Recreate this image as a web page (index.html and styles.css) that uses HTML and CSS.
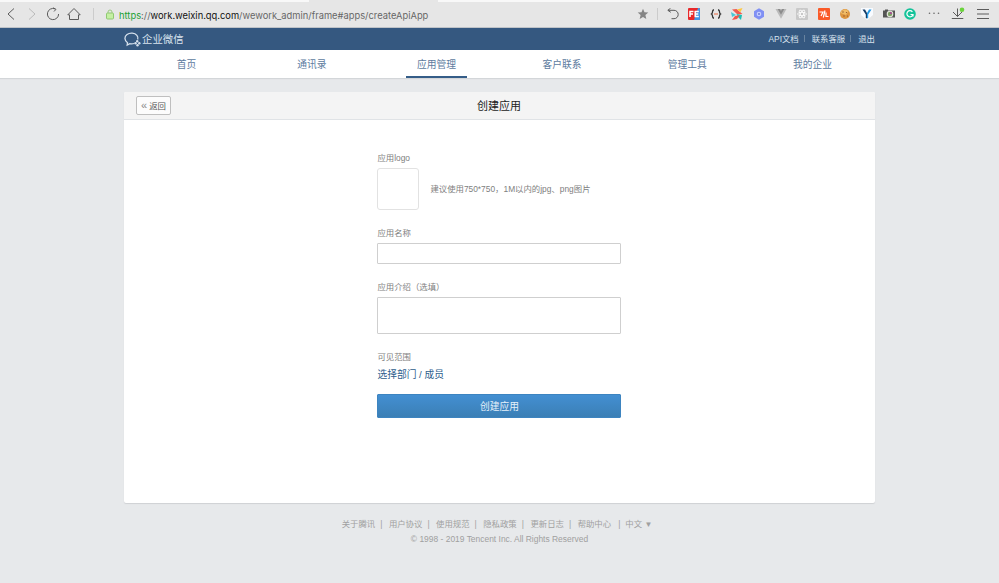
FILE: index.html
```html
<!DOCTYPE html>
<html lang="zh-CN">
<head>
<meta charset="UTF-8" />
<meta name="viewport" content="width=device-width, initial-scale=1" />
<title>创建应用 - 企业微信</title>
<link rel="stylesheet" href="styles.css">
</head>
<body>

<div class="tabs"><div class="tab"></div></div>
<div class="browser">
  <svg class="icon back" width="10" height="14" viewBox="0 0 10 14"><path d="M8 1.500 2 7l6 5.500"/></svg>
  <svg class="icon forward" width="10" height="14" viewBox="0 0 10 14"><path d="M2 1.500 8 7l-6 5.500"/></svg>
  <svg class="icon reload" width="14" height="14" viewBox="0 0 14 14"><path d="M9 1.800A5.600 5.600 0 1 0 12.600 7M7 .8l3 1.500-2 2.200"/></svg>
  <svg class="icon home" width="14" height="14" viewBox="0 0 14 14"><path d="M.8 7.800 7 1.500l6.200 6.300H11.500V12.500h-9V7.800Z"/></svg>
  <span class="divider"></span>
  <svg class="lock" width="8" height="11" viewBox="0 0 8 11"><path d="M2 5V3a2 2 0 0 1 4 0v2" fill="none" stroke="#9ccb83"/><rect x=".5" y="4" width="7" height="6" rx="1" fill="#c4f0a3" stroke="#8fc873"/></svg>
  <span class="url"><span class="scheme">https</span>://<span class="host">work.weixin.qq.com</span>/wework_admin/frame#apps/createApiApp</span>
  <div class="extensions">
    <svg width="12" height="12" viewBox="0 0 12 12"><path fill="#858585" d="m6 .8 1.500 3.500 3.800.3-2.900 2.500.9 3.800L6 8.900l-3.300 2 .9-3.800L.7 4.600l3.800-.3Z"/></svg>
    <span class="divider"></span>
    <svg class="icon" width="12" height="12" viewBox="0 0 12 12"><path d="M3.500.3.8 2.300l3 2M1 2.300h6a4.200 4.200 0 0 1 0 8.400H4.500"/></svg>
    <svg width="12" height="12" viewBox="0 0 12 12"><rect width="12" height="12" rx="1" fill="#e8282a"/><path fill="#4595e4" d="M10 0h1a1 1 0 0 1 1 1v10a1 1 0 0 1-1 1H6Z"/><path fill="none" stroke="#fff" stroke-width="1.500" d="M5.500 3.500H2V9M2 6h3M10.800 3.500H7.200v5h3.600M7 6h3.300"/></svg>
    <svg width="12" height="12" viewBox="0 0 12 12"><path fill="none" stroke="#333" stroke-width="1.300" d="M4 2H3.300C2 2.300 3.200 5 1.500 6c1.700 1 .5 3.700 1.800 4H4M8 2h.7c1.300.3.100 3 1.800 4-1.700 1-.5 3.700-1.800 4H8"/><path stroke="#e8663d" d="M4 6h4"/></svg>
    <svg class="bird" width="14" height="14" viewBox="0 0 14 14"><path fill="#f05b4f" d="M2 2.500 6.500 2l6 5-5 .5Z"/><path fill="#ffc83d" d="m12.500 1-2 4L7 2.500Z"/><path fill="#1bc0b6" d="m6.500 7 5.500 1-1 5-3-3Z"/><path fill="#f0584c" d="m5 9 5-1-3 4-5 1Z"/><path fill="#48c8d4" d="m1 5 5 3-4 2Z"/></svg>
    <svg width="12" height="12" viewBox="0 0 12 12"><path fill="#8090f4" d="m6 .3 5 2.900v5.600l-5 2.900-5-2.900V3.200Z"/><circle cx="6" cy="6" r="2.300" fill="#c6ceff"/><circle cx="6" cy="6" r=".9" fill="#6272d8"/></svg>
    <svg width="12" height="12" viewBox="0 0 12 12"><path fill="#bbb" d="M.5 1h11L6 10.800Z"/><path fill="#8c8c8c" d="M2.700 1h2.100L6 3l1.200-2h2.100L6 6.800Z"/></svg>
    <svg width="12" height="12" viewBox="0 0 12 12"><rect width="12" height="12" rx="1" fill="#c9c9c9"/><g fill="none" stroke="#fff" stroke-width=".8"><ellipse cx="6" cy="6" rx="4.500" ry="1.700"/><ellipse cx="6" cy="6" rx="4.500" ry="1.700" transform="rotate(60 6 6)"/><ellipse cx="6" cy="6" rx="4.500" ry="1.700" transform="rotate(120 6 6)"/></g></svg>
    <svg width="12" height="12" viewBox="0 0 12 12"><rect width="12" height="12" rx="1" fill="#fa5a28"/><path fill="none" stroke="#fff" stroke-width="1.200" d="M1.500 4H5L3 8M7 2.500 5.300 9.500M8 4.500 8 8.500h2.500"/></svg>
    <svg width="12" height="12" viewBox="0 0 12 12"><circle cx="6" cy="6" r="5" fill="#dd963f"/><path fill="#f0bc67" d="M1.500 5a4.700 4.700 0 0 1 8-2L7 7Z"/><g fill="#8a512a"><circle cx="4" cy="4" r=".7"/><circle cx="7.500" cy="4.500" r=".6"/><circle cx="5" cy="8" r=".7"/><circle cx="8.500" cy="8" r=".6"/></g></svg>
    <svg width="12" height="12" viewBox="0 0 12 12"><path fill="#f8fbff" d="M0 0h12v7l-6 5-6-5Z"/><path fill="#173f69" d="M1.500 1.500H4L6 5v5.500L4.800 10V6.500Z"/><path fill="#279ae4" d="M10.500 1.500H8L6 5v5.500l1.200-.5V6.500Z"/></svg>
    <svg width="12" height="12" viewBox="0 0 12 12"><path fill="#555" d="M0 2.500h2v-1h3v1h7v7H0Z"/><circle cx="7" cy="6" r="3.300" fill="#e5e8dc"/><circle cx="7" cy="6" r="2.200" fill="#7c9d63"/><path fill="#a54f91" d="M7 6V3.800A2.200 2.200 0 0 1 9.200 6Z"/></svg>
    <svg width="12" height="12" viewBox="0 0 12 12"><circle cx="6" cy="6" r="5.800" fill="#15c39a"/><path fill="none" stroke="#fff" stroke-width="1.200" d="M8.400 3.800A3.100 3.100 0 1 0 9 6.500H6.500M9 6.500v2"/></svg>
    <svg class="more" width="12" height="12" viewBox="0 0 12 12"><g fill="#666"><circle cx="1.500" cy="5.200" r=".8"/><circle cx="6" cy="5.200" r=".8"/><circle cx="10.500" cy="5.200" r=".8"/></g></svg>
    <svg class="icon download" width="14" height="14" viewBox="0 0 14 14"><path d="M6.500 1.500v8M2 5l4.500 4.500L11 5M.8 11.500h11.500"/><circle cx="11" cy="2.800" r="2.300" fill="#6ad33b" stroke="none"/></svg>
    <svg class="icon menu" width="12" height="12" viewBox="0 0 12 12"><path d="M0 1.500h12M0 6h12M0 10.500h12"/></svg>
  </div>
</div>

<header>
  <div class="wrap">
    <a class="brand" href="#">
      <svg width="17" height="15" viewBox="0 0 17 15"><path fill="none" stroke="#d5e0ec" stroke-width="1.300" d="M10 11.500c-1.400.5-2.800.5-4.200.2L3.200 13l.3-2.300C.2 8.400.1 4.700 3 2.500c3-2.200 7.700-1.800 9.900.8 1.100 1.400 1.400 2.800.8 4.200"/><g fill="#d5e0ec"><circle cx="13.200" cy="9.300" r="1.200"/><circle cx="11.500" cy="11.300" r="1.200"/><circle cx="15.300" cy="11.200" r="1.200"/><circle cx="13.500" cy="13.200" r="1.200"/></g></svg>
      <span>企业微信</span>
    </a>
    <div class="links"><a href="#">API文档</a><i></i><a href="#">联系客服</a><i></i><a href="#">退出</a></div>
  </div>
</header>

<nav>
  <a href="#">首页</a>
  <a href="#">通讯录</a>
  <a href="#" class="active">应用管理</a>
  <a href="#">客户联系</a>
  <a href="#">管理工具</a>
  <a href="#">我的企业</a>
</nav>

<main class="card">
  <div class="card-head">
    <a class="return" href="#"><span>«</span> 返回</a>
    <h1>创建应用</h1>
  </div>
  <form>
    <label>应用logo</label>
    <div class="logo-row">
      <div class="logo-box"></div>
      <span>建议使用750*750，1M以内的jpg、png图片</span>
    </div>
    <label for="name">应用名称</label>
    <input id="name" type="text">
    <label for="intro">应用介绍（选填）</label>
    <textarea id="intro"></textarea>
    <label>可见范围</label>
    <a class="choose" href="#">选择部门 / 成员</a>
    <button type="button">创建应用</button>
  </form>
</main>

<footer>
  <div class="footer-links">
    <a href="#">关于腾讯</a><i>|</i><a href="#">用户协议</a><i>|</i><a href="#">使用规范</a><i>|</i><a href="#">隐私政策</a><i>|</i><a href="#">更新日志</a><i>|</i><a href="#">帮助中心</a><i class="last">|</i><a class="lang" href="#">中文 <span>▼</span></a>
  </div>
  <p>© 1998 - 2019 Tencent Inc. All Rights Reserved</p>
</footer>

</body>
</html>
```
FILE: styles.css
```css
* { box-sizing: border-box; }
body {
  margin: 0; height: 583px; overflow: hidden; background: #e7e9eb;
  font-family: "Liberation Sans", "Noto Sans CJK SC", sans-serif; font-size: 8.4px; color: #808080;
}
a { color: inherit; text-decoration: none; }
i { font-style: normal; }
svg { display: block; flex: none; }

.tabs { height: 2px; padding-left: 309px; background: #f8f8f8; }
.tab { width: 129px; height: 2px; background: #e6e6e6; }
.browser {
  height: 26px; padding: 0 10px 1px 6px; display: flex; align-items: center;
  background: #e6e6e6; border-bottom: 1px solid #bfc3c8;
}
.icon { fill: none; stroke: #5c5c5c; stroke-width: 1; }
.forward { stroke: #bbb; margin-left: 11px; }
.reload { margin-left: 9px; }
.home { margin-left: 7px; }
.divider { width: 1px; height: 12px; background: #ccc; }
.home + .divider { margin-left: 12px; }
.lock { margin-left: 12px; }
.url { margin: 2px 0 0 5px; font-family: Inter, sans-serif; font-size: 9.35px; color: #666; white-space: nowrap; }
.scheme { color: #16a132; }
.host { color: #111; }
.extensions { margin-left: auto; display: flex; align-items: center; gap: 9.6px; }
.extensions .divider { margin: 0 -1px; }
.extensions .bird { margin: 0 -1px; }
.extensions .more { margin-left: 2px; }
.extensions .download { margin-left: 2px; }
.extensions .menu { margin-left: 2px; }

header { height: 22px; background: #355880; color: #d9e3ee; }
.wrap { width: 751px; height: 100%; margin: 0 auto; display: flex; align-items: center; justify-content: space-between; }
.brand { display: flex; align-items: center; gap: 1px; font-size: 10.4px; }
.brand span { padding-bottom: 2px; }
.links { display: flex; align-items: center; padding-bottom: 2px; }
.links i { width: 1px; height: 7px; margin: 0 7px 0 5px; background: #68839f; }

nav {
  height: 28px; padding: 0 124px; display: flex;
  background: #fff; box-shadow: 0 1px 1px #d3d6d9; color: #5d7b9e; font-size: 9.75px;
}
nav a { flex: 1; display: flex; justify-content: center; align-items: center; }
nav .active { flex: none; width: 61px; margin: 0 32px; border-bottom: 2px solid #355d88; padding: 2px 1px 0 0; }

.card {
  width: 751px; height: 411px; margin: 14px auto 0; background: #fff;
  border-radius: 2px; box-shadow: 0 1px 1px #cfd1d4;
}
.card-head {
  height: 28px; padding-left: 12px; display: grid; grid-template-columns: 1fr auto 1fr; align-items: center;
  background: #f4f4f4; border-bottom: 1px solid #e0e3e6; border-radius: 2px 2px 0 0;
}
.return {
  width: 35px; height: 19px; padding-bottom: 2px; display: flex; align-items: center; justify-content: center; gap: 2px;
  background: #fcfcfc; border: 1px solid #bfbfbf; border-radius: 2px; color: #555;
}
.return span { font-size: 11px; line-height: 10px; color: #888; }
h1 { margin: 0; font-size: 11px; font-weight: normal; color: #222; }
.card-head h1 { margin-left: -13px; padding-bottom: 2px; }

form { width: 244px; margin: 0 0 0 253.4px; padding-top: 32px; display: flex; flex-direction: column; }
label { height: 12px; margin-bottom: 4px; line-height: 12px; }
.logo-row { height: 42px; margin-bottom: 17px; display: flex; align-items: center; gap: 11px; }
.logo-row span { padding-bottom: 2px; }
.logo-box { width: 42px; height: 42px; border: 1px solid #e2e2e2; border-radius: 3px; }
input, textarea { width: 100%; margin: 0; border: 1px solid #cfcfcf; border-radius: 1px; background: #fff; resize: none; outline: none; }
input { height: 21px; margin-bottom: 17px; }
textarea { height: 37px; margin-bottom: 17px; }
.choose { height: 16px; line-height: 16px; font-size: 9.75px; color: #2d5e8c; }
button {
  height: 24px; margin-top: 11px; padding: 0 0 1px; border: 1px solid #3d84c0; border-radius: 1px;
  background: linear-gradient(#438fd2, #3b7fb5); color: #e6f1fa; font-family: inherit; font-size: 9.75px;
}

footer { margin-top: 15px; text-align: center; color: #a0a0a0; }
.footer-links { padding-right: 5px; display: flex; justify-content: center; line-height: 12px; }
.footer-links i { margin: 0 6.5px 0 5px; }
.footer-links .last { margin: 0 5px 0 7px; }
.lang span { font-size: 8px; }
footer p { margin: 2px 0 0; line-height: 12px; font-size: 8.45px; }
```
